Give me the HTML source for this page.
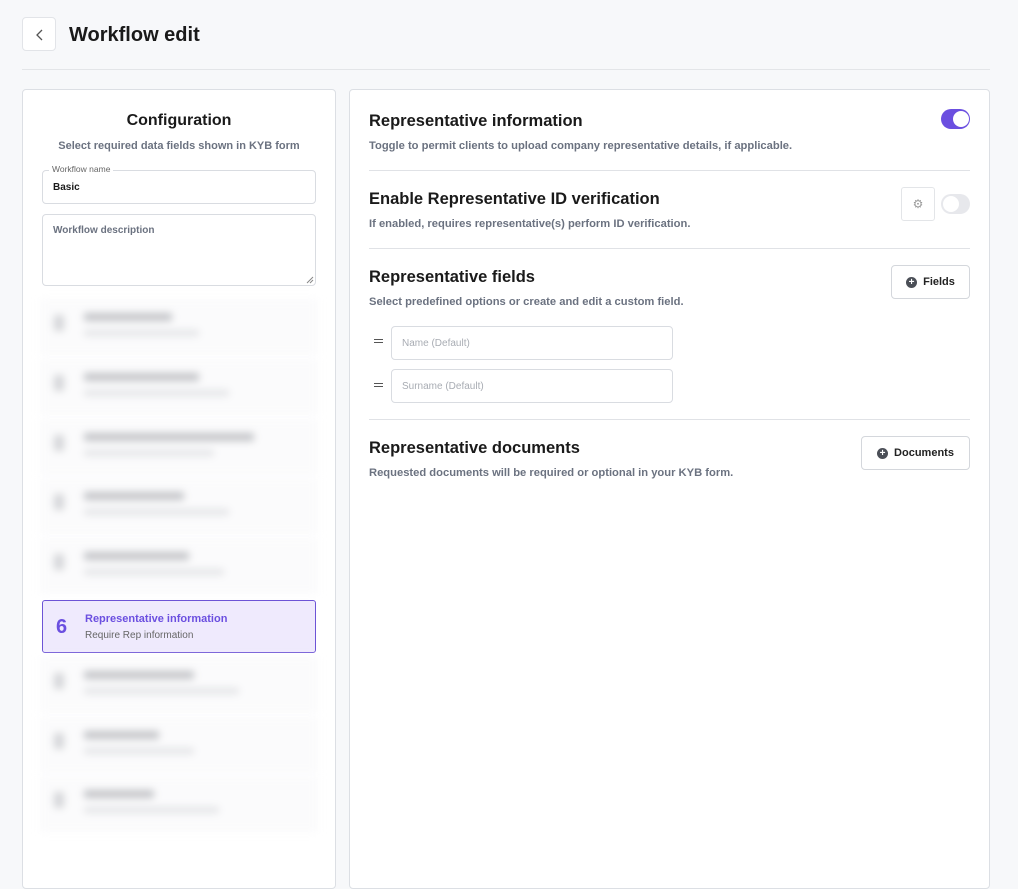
<!DOCTYPE html>
<html><head><meta charset="utf-8"><style>
*{box-sizing:border-box;margin:0;padding:0}
body{width:1018px;height:882px;background:#f7f8fa;font-family:"Liberation Sans",sans-serif;color:#1a1a1a;position:relative;overflow:hidden}
.abs{position:absolute}
.back{left:22px;top:17px;width:34px;height:34px;border:1px solid #e2e4e8;border-radius:4px;background:#fff}
h1{position:absolute;left:69px;top:24px;font-size:20px;font-weight:bold;color:#1a1a1a}
.hr{position:absolute;left:22px;top:69px;width:968px;height:1px;background:#e3e5e8}
.panel{position:absolute;background:#fff;border:1px solid #dcdfe4;border-radius:4px}
.gray{color:#6b7280;font-weight:bold}
.inp{position:absolute;border:1px solid #d9dce1;border-radius:4px;background:#fff}
.item{position:absolute;left:40px;width:278px;height:56px;filter:blur(4px);background:#fbfbfc}
.item .n{position:absolute;left:14px;top:16px;width:10px;height:16px;background:#d4d5d8;border-radius:2px}
.item .t{position:absolute;left:44px;top:14px;width:100px;height:8px;background:#c2c3c7;border-radius:2px}
.item .s{position:absolute;left:44px;top:31px;width:140px;height:6px;background:#e2e3e6;border-radius:2px}
.h2{position:absolute;left:369px;font-size:16.5px;font-weight:bold;color:#1a1a1a}
.sub{position:absolute;left:369px;font-size:11.2px;font-weight:bold;color:#6b7280}
.sep{position:absolute;left:369px;width:601px;height:1px;background:#e0e2e6}
.btn{position:absolute;border:1px solid #d4d7dc;border-radius:4px;background:#fff;font-size:11px;font-weight:bold;color:#222;display:flex;align-items:center;justify-content:center;gap:6px}
.plus{width:11px;height:11px;border-radius:50%;background:#4b4f57;color:#fff;font-size:10px;line-height:11px;text-align:center}
.eq{position:absolute;left:374px;width:9px;height:4px;border-top:1.5px solid #555;border-bottom:1.5px solid #555}
.ph{position:absolute;left:10px;top:11px;font-size:10px;color:#a8acb3}
</style></head><body>
<div class="abs back"><svg width="34" height="34" viewBox="0 0 34 34"><path d="M19 12l-5 5 5 5" fill="none" stroke="#555" stroke-width="1.3"/></svg></div>
<h1>Workflow edit</h1>
<div class="hr"></div>

<div class="panel" style="left:22px;top:89px;width:314px;height:800px"></div>
<div class="abs" style="left:22px;top:112px;width:314px;text-align:center;font-size:16px;font-weight:bold">Configuration</div>
<div class="abs gray" style="left:22px;top:140px;width:314px;text-align:center;font-size:11px">Select required data fields shown in KYB form</div>
<div class="inp" style="left:42px;top:170px;width:274px;height:34px"></div>
<div class="abs" style="left:49px;top:164px;padding:0 3px;background:#fff;font-size:8.5px;color:#666">Workflow name</div>
<div class="abs" style="left:53px;top:182px;font-size:10px;font-weight:bold">Basic</div>
<div class="inp" style="left:42px;top:214px;width:274px;height:72px"></div>
<div class="abs gray" style="left:53px;top:225px;font-size:10px">Workflow description</div>
<svg class="abs" style="left:306px;top:276px" width="8" height="8"><path d="M1 7L7 1M4 7L7 4" stroke="#888"/></svg>

<div class="item" style="top:299px"><div class="n"></div><div class="t" style="width:88px"></div><div class="s" style="width:115px"></div></div>
<div class="item" style="top:359px"><div class="n"></div><div class="t" style="width:115px"></div><div class="s" style="width:145px"></div></div>
<div class="item" style="top:419px"><div class="n"></div><div class="t" style="width:170px"></div><div class="s" style="width:130px"></div></div>
<div class="item" style="top:478px"><div class="n"></div><div class="t"></div><div class="s" style="width:145px"></div></div>
<div class="item" style="top:538px"><div class="n"></div><div class="t" style="width:105px"></div><div class="s" style="width:140px"></div></div>
<div class="abs" style="left:42px;top:600px;width:274px;height:53px;background:#efeafd;border:1px solid #6d54d6;border-radius:3px">
<div class="abs" style="left:13px;top:15px;font-size:20px;font-weight:bold;color:#6b4fe0">6</div>
<div class="abs" style="left:42px;top:12px;font-size:11px;font-weight:bold;color:#6b4fe0">Representative information</div>
<div class="abs" style="left:42px;top:29px;font-size:10px;color:#666">Require Rep information</div></div>
<div class="item" style="top:657px"><div class="n"></div><div class="t" style="width:110px"></div><div class="s" style="width:155px"></div></div>
<div class="item" style="top:717px"><div class="n"></div><div class="t" style="width:75px"></div><div class="s" style="width:110px"></div></div>
<div class="item" style="top:776px"><div class="n"></div><div class="t" style="width:70px"></div><div class="s" style="width:135px"></div></div>

<div class="panel" style="left:349px;top:89px;width:641px;height:800px"></div>
<div class="h2" style="top:112px">Representative information</div>
<div class="sub" style="top:140px">Toggle to permit clients to upload company representative details, if applicable.</div>
<div class="abs" style="left:941px;top:109px;width:29px;height:20px;border-radius:10px;background:#6b4fe0"><div class="abs" style="left:12px;top:2px;width:16px;height:16px;border-radius:50%;background:#fff"></div></div>
<div class="sep" style="top:170px"></div>
<div class="h2" style="top:190px">Enable Representative ID verification</div>
<div class="sub" style="top:218px">If enabled, requires representative(s) perform ID verification.</div>
<div class="abs" style="left:901px;top:187px;width:34px;height:34px;border:1px solid #e3e5e8;border-radius:3px;display:flex;align-items:center;justify-content:center;color:#999;font-size:12px">⚙</div>
<div class="abs" style="left:941px;top:194px;width:29px;height:20px;border-radius:10px;background:#e7e8ec"><div class="abs" style="left:2px;top:2px;width:16px;height:16px;border-radius:50%;background:#fff"></div></div>
<div class="sep" style="top:248px"></div>
<div class="h2" style="top:268px">Representative fields</div>
<div class="sub" style="top:296px">Select predefined options or create and edit a custom field.</div>
<div class="btn" style="left:891px;top:265px;width:79px;height:34px"><span class="plus">+</span>Fields</div>
<div class="eq" style="top:339px"></div>
<div class="inp" style="left:391px;top:326px;width:282px;height:34px"><div class="ph">Name (Default)</div></div>
<div class="eq" style="top:383px"></div>
<div class="inp" style="left:391px;top:369px;width:282px;height:34px"><div class="ph">Surname (Default)</div></div>
<div class="sep" style="top:419px"></div>
<div class="h2" style="top:439px">Representative documents</div>
<div class="sub" style="top:467px">Requested documents will be required or optional in your KYB form.</div>
<div class="btn" style="left:861px;top:436px;width:109px;height:34px"><span class="plus">+</span>Documents</div>
</body></html>
